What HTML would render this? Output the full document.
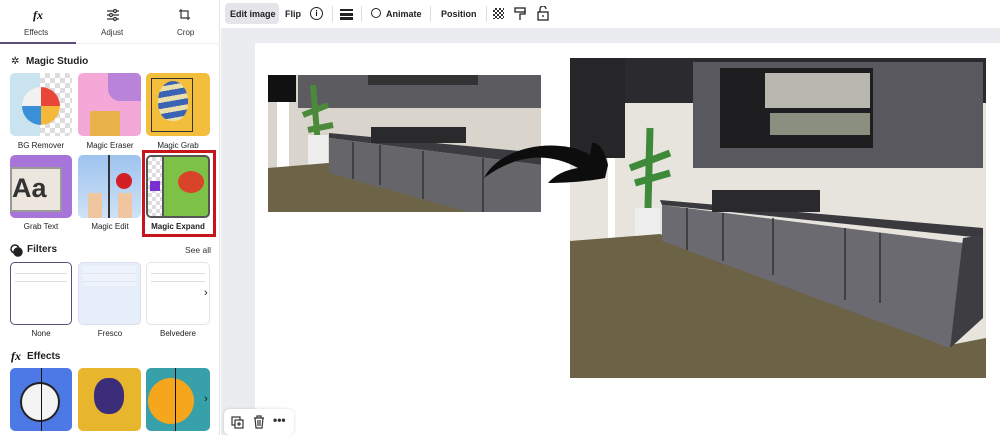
<!DOCTYPE html>
<html><head><meta charset="utf-8"><style>
*{box-sizing:border-box;margin:0;padding:0}
body{width:1000px;height:435px;overflow:hidden;background:#fff;font-family:"Liberation Sans",sans-serif;color:#111;position:relative}
.a{position:absolute}
.lbl{position:absolute;font-size:8px;text-align:center;width:66px;color:#222}
.h{position:absolute;font-size:10px;font-weight:bold;color:#222}
.tile{position:absolute;border-radius:5px;overflow:hidden}
.tb{position:absolute;font-size:9px;font-weight:bold;color:#222;top:9px}
.sep{position:absolute;top:6px;width:1px;height:16px;background:#ddd}
.fl{position:absolute;left:4px;right:4px;height:20px;background:repeating-linear-gradient(#fff 0 7px,#ccc 7px 8px);opacity:.6}
</style></head><body>
<div class="a" style="left:0;top:0;width:220px;height:435px;background:#fff;border-right:1px solid #e3e3e6"></div>
<div class="a" style="left:33px;top:8px;font-style:italic;font-family:'Liberation Serif',serif;font-weight:bold;font-size:12px">fx</div>
<div class="a" style="left:24px;top:28px;font-size:8px;color:#333">Effects</div>
<svg class="a" style="left:106px;top:8px" width="14" height="14" viewBox="0 0 14 14" fill="none" stroke="#333" stroke-width="1.2"><path d="M1 3h12M1 7h12M1 11h12"/><circle cx="9" cy="3" r="1.5" fill="#fff"/><circle cx="5" cy="7" r="1.5" fill="#fff"/><circle cx="9" cy="11" r="1.5" fill="#fff"/></svg>
<div class="a" style="left:101px;top:28px;font-size:8px;color:#333">Adjust</div>
<svg class="a" style="left:178px;top:8px" width="14" height="14" viewBox="0 0 14 14" fill="none" stroke="#333" stroke-width="1.2"><path d="M3 1v9h9M1 3h9v9"/></svg>
<div class="a" style="left:177px;top:28px;font-size:8px;color:#333">Crop</div>
<div class="a" style="left:0;top:42px;width:76px;height:2px;background:#5c4c7a"></div>
<div class="a" style="left:76px;top:43px;width:144px;height:1px;background:#eee"></div>

<div class="a" style="left:11px;top:56px;font-size:10px">✲</div>
<div class="h" style="left:26px;top:56px">Magic Studio</div>
<div class="tile" style="left:10px;top:73px;width:62px;height:63px;background:repeating-conic-gradient(#ddd 0 25%,#fff 0 50%) 0 0/10px 10px"><div class="a" style="left:0;top:0;width:30px;height:63px;background:#c9e3ef"></div><div class="a" style="left:12px;top:14px;width:38px;height:38px;border-radius:50%;background:conic-gradient(#e9463a 0 25%,#f4b93a 0 50%,#3a8fd9 0 75%,#f1f1f1 0)"></div></div>
<div class="lbl" style="left:8px;top:141px">BG Remover</div>
<div class="tile" style="left:78px;top:73px;width:63px;height:63px;background:#f4a8d8"><div class="a" style="left:30px;top:0;width:33px;height:28px;background:#b983d9;border-radius:0 0 0 12px"></div><div class="a" style="left:12px;top:38px;width:30px;height:25px;background:#e9b34a"></div></div>
<div class="lbl" style="left:77px;top:141px">Magic Eraser</div>
<div class="tile" style="left:146px;top:73px;width:64px;height:63px;background:#f3be3b"><div class="a" style="left:12px;top:8px;width:30px;height:40px;border-radius:50% 50% 45% 45%;background:repeating-linear-gradient(170deg,#3b63b3 0 6px,#e9dfaa 6px 11px)"></div><div class="a" style="left:5px;top:5px;width:42px;height:54px;border:1px solid #333"></div></div>
<div class="lbl" style="left:145px;top:141px">Magic Grab</div>

<div class="tile" style="left:10px;top:155px;width:62px;height:63px;background:#a774d9"><div class="a" style="left:0;top:12px;width:52px;height:45px;background:#ece6df;border:2px solid #999"></div><div class="a" style="left:2px;top:18px;font-size:27px;color:#333;font-weight:bold">Aa</div></div>
<div class="lbl" style="left:8px;top:222px">Grab Text</div>
<div class="tile" style="left:78px;top:155px;width:63px;height:63px;background:linear-gradient(#9ec3ee,#cfe2f7)"><div class="a" style="left:30px;top:0;width:2px;height:63px;background:#333"></div><div class="a" style="left:38px;top:18px;width:16px;height:16px;border-radius:50%;background:#d32027"></div><div class="a" style="left:10px;top:38px;width:14px;height:25px;background:#f0c6a0"></div><div class="a" style="left:40px;top:38px;width:14px;height:25px;background:#f0c6a0"></div></div>
<div class="lbl" style="left:77px;top:222px">Magic Edit</div>
<div class="tile" style="left:146px;top:155px;width:64px;height:63px;border:2px solid #555;background:#7dc246"><div class="a" style="left:0;top:0;width:14px;height:60px;background:repeating-conic-gradient(#ddd 0 25%,#fff 0 50%) 0 0/8px 8px"></div><div class="a" style="left:14px;top:0;width:2px;height:60px;background:#555"></div><div class="a" style="left:2px;top:24px;width:10px;height:10px;background:#7a2fd0"></div><div class="a" style="left:30px;top:14px;width:26px;height:22px;border-radius:50%;background:#d8432a"></div></div>
<div class="lbl" style="left:145px;top:222px;font-weight:bold">Magic Expand</div>
<div class="a" style="left:142px;top:150px;width:74px;height:87px;border:3px solid #c4161c"></div>

<svg class="a" style="left:10px;top:244px" width="13" height="13" viewBox="0 0 13 13" fill="none" stroke="#222" stroke-width="1.5"><circle cx="5" cy="5" r="4"/><circle cx="8" cy="8" r="4" fill="#222"/></svg>
<div class="h" style="left:27px;top:244px">Filters</div>
<div class="a" style="left:185px;top:245px;font-size:8.5px;color:#333">See all</div>
<div class="tile" style="left:10px;top:262px;width:62px;height:63px;border:1.5px solid #5c4c7a;background:#fff"><div class="fl" style="top:3px"></div></div>
<div class="tile" style="left:78px;top:262px;width:63px;height:63px;background:#e6eefa;border:1px solid #dde"><div class="fl" style="top:3px;opacity:.3"></div></div>
<div class="tile" style="left:146px;top:262px;width:64px;height:63px;background:#fff;border:1px solid #e4e4e4"><div class="fl" style="top:3px"></div></div>
<div class="a" style="left:204px;top:287px;font-size:11px">›</div>
<div class="lbl" style="left:8px;top:329px">None</div>
<div class="lbl" style="left:77px;top:329px">Fresco</div>
<div class="lbl" style="left:145px;top:329px">Belvedere</div>

<div class="a" style="left:11px;top:349px;font-style:italic;font-family:'Liberation Serif',serif;font-weight:bold;font-size:12px">fx</div>
<div class="h" style="left:27px;top:351px">Effects</div>
<div class="tile" style="left:10px;top:368px;width:62px;height:63px;background:#4c79e6"><div class="a" style="left:10px;top:14px;width:40px;height:40px;border-radius:50%;background:#f4f4f4;border:2px solid #222"></div><div class="a" style="left:31px;top:0;width:1px;height:63px;background:#111"></div></div>
<div class="tile" style="left:78px;top:368px;width:63px;height:63px;background:#e7b62d"><div class="a" style="left:16px;top:10px;width:30px;height:36px;border-radius:45%;background:#3c2d7a"></div></div>
<div class="tile" style="left:146px;top:368px;width:64px;height:63px;background:#38a0a8"><div class="a" style="left:2px;top:10px;width:46px;height:46px;border-radius:50%;background:#f6a61d"></div><div class="a" style="left:29px;top:0;width:1px;height:63px;background:#111"></div></div>
<div class="a" style="left:204px;top:393px;font-size:11px">›</div>

<div class="a" style="left:225px;top:3px;width:54px;height:21px;background:#e4e4e9;border-radius:4px"></div>
<div class="tb" style="left:230px">Edit image</div>
<div class="tb" style="left:285px">Flip</div>
<div class="a" style="left:310px;top:7px;width:13px;height:13px;border:1.3px solid #222;border-radius:50%;font-size:8px;text-align:center;line-height:11px;font-weight:bold">i</div>
<div class="sep" style="left:332px"></div>
<div class="a" style="left:340px;top:9px;width:13px;height:2px;background:#222"></div>
<div class="a" style="left:340px;top:13px;width:13px;height:3px;background:#222"></div>
<div class="a" style="left:340px;top:17px;width:13px;height:3px;background:#222"></div>
<div class="sep" style="left:361px"></div>
<div class="a" style="left:371px;top:8px;width:10px;height:10px;border:1.3px solid #222;border-radius:50%"></div>
<div class="tb" style="left:386px">Animate</div>
<div class="sep" style="left:430px"></div>
<div class="tb" style="left:441px">Position</div>
<div class="sep" style="left:486px"></div>
<div class="a" style="left:493px;top:8px;width:11px;height:11px;background:repeating-conic-gradient(#333 0 25%,#fff 0 50%) 0 0/4px 4px"></div>
<svg class="a" style="left:514px;top:7px" width="12" height="14" viewBox="0 0 12 14" fill="none" stroke="#222" stroke-width="1.3"><rect x="1" y="1" width="10" height="4"/><path d="M11 3h0v4H6v6"/></svg>
<svg class="a" style="left:537px;top:6px" width="12" height="15" viewBox="0 0 12 15" fill="none" stroke="#222" stroke-width="1.3"><rect x="1" y="6" width="10" height="8"/><path d="M3 6V3a3 3 0 0 1 6 0"/><path d="M6 9v2"/></svg>

<div class="a" style="left:221px;top:28px;width:779px;height:15px;background:#ebecf0"></div>
<div class="a" style="left:221px;top:28px;width:34px;height:407px;background:#ebecf0"></div>

<svg class="a" style="left:268px;top:75px" width="273" height="137" viewBox="0 0 273 137">
<rect width="273" height="137" fill="#d9d5cc"/>
<rect x="30" y="0" width="243" height="33" fill="#5b5b60"/>
<rect x="100" y="0" width="110" height="10" fill="#333"/>
<rect x="0" y="0" width="28" height="27" fill="#111"/>
<rect x="9" y="27" width="12" height="68" fill="#fff"/>
<path d="M45 10 L50 70 M35 40 L60 30 M40 55 L65 50" stroke="#4a8a3a" stroke-width="6"/>
<rect x="40" y="60" width="20" height="30" fill="#eee"/>
<path d="M0 93 L60 88 L273 133 L273 137 L0 137Z" fill="#6d6448"/>
<path d="M61 58 L273 78 L273 90 L61 63Z" fill="#3c3c40"/>
<path d="M61 63 L273 90 L273 137 L200 137 L61 98Z" fill="#66666a"/>
<path d="M85 67v37M112 70v40M155 76v48M215 83v54" stroke="#333" stroke-width="1.5"/>
<rect x="103" y="52" width="95" height="16" fill="#2a2a2d"/>
</svg>

<svg class="a" style="left:570px;top:58px" width="416" height="320" viewBox="0 0 416 320">
<rect width="416" height="320" fill="#e7e4de"/>
<rect width="416" height="45" fill="#2b2b2f"/>
<rect x="0" y="0" width="55" height="100" fill="#262629"/>
<rect x="123" y="4" width="290" height="106" fill="#58585e"/>
<rect x="150" y="10" width="153" height="80" fill="#1e1e20"/>
<rect x="195" y="15" width="105" height="35" fill="#b8b8b0"/>
<rect x="200" y="55" width="100" height="22" fill="#8a8f80"/>
<rect x="38" y="100" width="7" height="92" fill="#fff"/>
<path d="M80 70 L78 150 M60 110 L100 95 M65 125 L100 115" stroke="#3f8a3a" stroke-width="7"/>
<rect x="65" y="150" width="25" height="30" fill="#eee"/>
<path d="M0 183 L90 176 L380 287 L416 280 L416 320 L0 320Z" fill="#6c6246"/>
<path d="M90 142 L413 170 L413 180 L92 147Z" fill="#3a3a3e"/>
<path d="M92 147 L393 185 L380 290 L92 183Z" fill="#6a6a70"/>
<path d="M393 180 L413 177 L413 260 L380 290Z" fill="#3d3d42"/>
<path d="M117 150v42M153 155v48M203 160v57M275 170v72M310 175v70" stroke="#333" stroke-width="1.5"/>
<rect x="142" y="132" width="108" height="22" fill="#2a2a2d"/>
</svg>

<svg class="a" style="left:0;top:0" width="1000" height="435">
<path d="M484 178 C495 155 530 143 560 146 C575 147 585 152 590 155 L592 143 C598 142 605 150 608 165 L605 178 C585 182 560 183 548 183 C555 175 565 170 578 168 C560 158 540 155 520 160 C505 164 492 172 484 178Z" fill="#0d0d0d"/>
</svg>

<div class="a" style="left:224px;top:409px;width:70px;height:26px;background:#fff;border-radius:6px;box-shadow:0 0 3px rgba(0,0,0,.15)"></div>
<svg class="a" style="left:231px;top:416px" width="13" height="13" viewBox="0 0 13 13" fill="none" stroke="#333" stroke-width="1.2"><rect x="1" y="1" width="8" height="8"/><rect x="4" y="4" width="8" height="8" fill="#fff"/><path d="M8 6v4M6 8h4"/></svg>
<svg class="a" style="left:253px;top:415px" width="12" height="14" viewBox="0 0 12 14" fill="none" stroke="#333" stroke-width="1.2"><path d="M1 3h10M4 3V1h4v2M2 3l1 10h6l1-10M5 5v6M7 5v6"/></svg>
<div class="a" style="left:273px;top:413px;font-size:12px;font-weight:bold;color:#333">•••</div>
</body></html>
